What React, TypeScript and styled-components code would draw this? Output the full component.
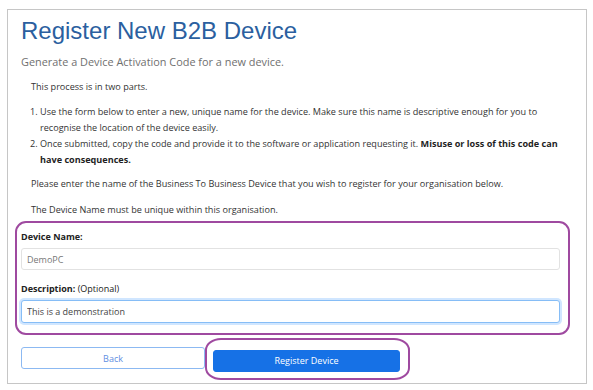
import * as React from 'react';
import styled, { createGlobalStyle } from 'styled-components';

const GlobalStyle = createGlobalStyle`
    html, body {
        margin: 0;
        background: #ffffff;
    }
    body {
        padding: 9px 0 0 7px;
        font-family: "Open Sans", "Noto Sans", "Liberation Sans", sans-serif;
    }
`;

const Panel = styled.div`
    box-sizing: border-box;
    width: 580px;
    height: 375px;
    border: 1px solid #c6c6c6;
    padding: 7px 26px 0 13px;
    display: flex;
    flex-direction: column;
`;

const Title = styled.h1`
    margin: 0;
    font-family: "Liberation Sans", Arial, sans-serif;
    font-weight: 400;
    font-size: 24px;
    line-height: 28px;
    color: #2b5f9f;
`;

const Subtitle = styled.p`
    margin: 9px 0 0 0;
    font-size: 10.9px;
    line-height: 16px;
    color: #6f6f6f;
`;

const Intro = styled.div`
    margin: 9px -12px 0 0;
    padding: 0 0 0 10px;
    font-size: 9.1px;
    line-height: 16px;
    color: #333333;
`;

const Para = styled.p<{ $gap?: number }>`
    margin: 0 0 ${p => p.$gap ?? 10}px 0;
`;

const Steps = styled.ol`
    margin: 0 0 8px 0;
    padding-left: 9px;
    b {
        color: #1f1f1f;
    }
`;

const FieldBox = styled.div`
    margin: 3px -10px 0 -6px;
    padding: 7px 8px 10px 4px;
    border: 2px solid #9f4aa0;
    border-radius: 11px;
`;

const Label = styled.label`
    display: block;
    font-size: 9px;
    line-height: 14px;
    color: #222222;
    b {
        font-weight: 700;
    }
`;

const Input = styled.input<{ $focused?: boolean }>`
    box-sizing: border-box;
    display: block;
    width: 100%;
    height: ${p => (p.$focused ? 23 : 22)}px;
    margin: 4px 0 0 0;
    padding: 0 5px;
    border: 1px solid ${p => (p.$focused ? '#86bdf6' : '#e2e2e2')};
    border-radius: 3px;
    box-shadow: ${p => (p.$focused ? '0 0 0 2px rgba(150, 200, 255, 0.45)' : 'none')};
    font-family: "Open Sans", "Noto Sans", sans-serif;
    font-size: 9px;
    color: ${p => (p.$focused ? '#444444' : '#777777')};
    background: #ffffff;
    outline: none;
`;

const FieldGap = styled.div`
    height: 12px;
`;

const Actions = styled.div`
    margin-top: 12px;
    display: grid;
    grid-template-columns: 184px 187px;
    column-gap: 8px;
`;

const Button = styled.button<{ $primary?: boolean }>`
    box-sizing: border-box;
    width: 100%;
    height: 22px;
    border-radius: 3px;
    border: 1px solid ${p => (p.$primary ? '#1671e6' : '#8cb9f2')};
    background: ${p => (p.$primary ? '#1671e6' : '#ffffff')};
    color: ${p => (p.$primary ? '#ffffff' : '#5f8fe2')};
    font-family: "Open Sans", "Noto Sans", sans-serif;
    font-size: 9px;
    cursor: pointer;
`;

const Circled = styled.div`
    position: relative;
    &::after {
        content: '';
        position: absolute;
        top: -9px;
        bottom: -8px;
        left: -8px;
        right: -10px;
        border: 2px solid #9f4aa0;
        border-radius: 16px / 12px;
        pointer-events: none;
    }
`;

export default function App() {
    return (
        <>
            <GlobalStyle />
            <Panel>
                <Title>Register New B2B Device</Title>
                <Subtitle>Generate a Device Activation Code for a new device.</Subtitle>
                <Intro>
                    <Para $gap={9}>This process is in two parts.</Para>
                    <Steps>
                        <li>Use the form below to enter a new, unique name for the device. Make sure this name is descriptive enough for you to recognise the location of the device easily.</li>
                        <li>Once submitted, copy the code and provide it to the software or application requesting it. <b>Misuse or loss of this code can have consequences.</b></li>
                    </Steps>
                    <Para>Please enter the name of the Business To Business Device that you wish to register for your organisation below.</Para>
                    <Para $gap={0}>The Device Name must be unique within this organisation.</Para>
                </Intro>
                <FieldBox>
                    <Label><b>Device Name:</b></Label>
                    <Input readOnly defaultValue="DemoPC" />
                    <FieldGap />
                    <Label><b>Description:</b> (Optional)</Label>
                    <Input $focused readOnly defaultValue="This is a demonstration" />
                </FieldBox>
                <Actions>
                    <Button>Back</Button>
                    <Circled>
                        <Button $primary>Register Device</Button>
                    </Circled>
                </Actions>
            </Panel>
        </>
    );
}
